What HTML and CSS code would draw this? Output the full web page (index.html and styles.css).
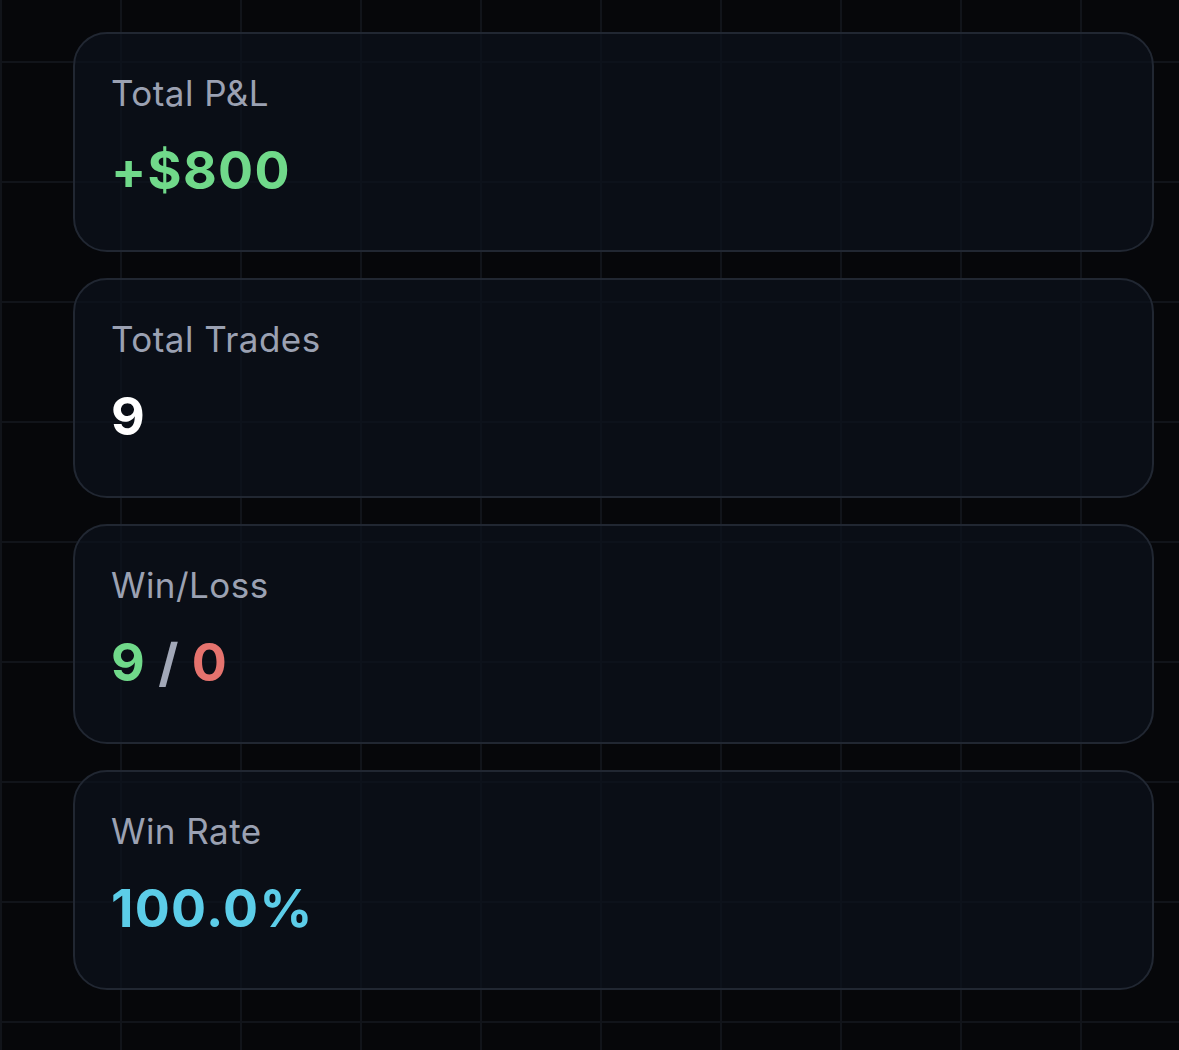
FILE: index.html
```html
<!DOCTYPE html>
<html>
<head>
<meta charset="utf-8">
<link rel="stylesheet" href="styles.css">
</head>
<body>
<main class="stats">
  <section class="card">
    <div class="label">Total P&amp;L</div>
    <div class="value green">+$800</div>
  </section>
  <section class="card">
    <div class="label">Total Trades</div>
    <div class="value white">9</div>
  </section>
  <section class="card">
    <div class="label">Win/Loss</div>
    <div class="value"><span class="green">9</span> <span class="slash">/</span> <span class="red">0</span></div>
  </section>
  <section class="card">
    <div class="label">Win Rate</div>
    <div class="value cyan">100.0%</div>
  </section>
</main>
</body>
</html>
```
FILE: styles.css
```css
html, body {
  margin: 0;
  padding: 0;
}
body {
  width: 1179px;
  height: 1050px;
  overflow: hidden;
  background-color: #06070a;
  background-image:
    linear-gradient(to right, #11141a 2px, transparent 2px),
    linear-gradient(to bottom, #11141a 2px, transparent 2px);
  background-size: 120px 120px;
  background-position: 120px 61px;
  font-family: Inter, "Noto Sans", sans-serif;
}
.stats {
  display: flex;
  flex-direction: column;
  gap: 26px;
  padding: 32px 25px 0 73px;
}
.card {
  height: 220px;
  box-sizing: border-box;
  border: 2px solid #212732;
  border-radius: 34px;
  background: rgba(13, 18, 28, 0.72);
  padding: 37px 36px 0;
}
.label {
  font-size: 35px;
  line-height: 44px;
  color: #9ba1b2;
  letter-spacing: 0.45px;
}
.value {
  margin-top: 25px;
  font-size: 52px;
  line-height: 62px;
  font-weight: 700;
  letter-spacing: 1.3px;
  word-spacing: -1.5px;
}
.green { color: #70d98a; }
.white { color: #ffffff; }
.red { color: #e5736e; }
.cyan { color: #5ccde8; }
.slash { color: #a2a8b8; }
```
